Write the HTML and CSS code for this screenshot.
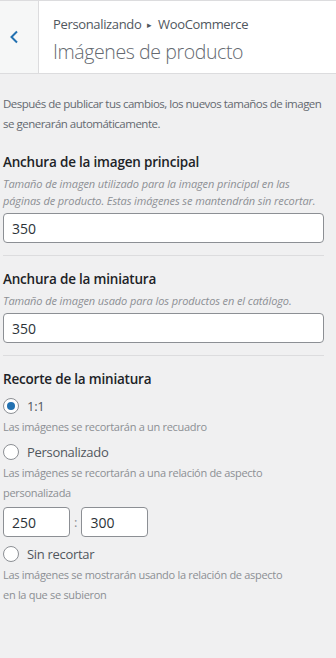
FILE: index.html
```html
<!DOCTYPE html>
<html lang="es">
<head>
    <meta charset="UTF-8">
    <meta name="viewport" content="width=device-width, initial-scale=1.0">
    <title>Imágenes de producto</title>
    <link rel="stylesheet" href="styles.css">
</head>
<body>
    <div class="section-header">
        <button class="back-btn" aria-label="Volver">
            <svg width="10" height="14" viewBox="0 0 10 14"><path d="M8 1.5 2.5 7 8 12.5" fill="none" stroke="#2271b1" stroke-width="2"/></svg>
        </button>
        <div class="section-title">
            <span class="breadcrumb">Personalizando <span class="sep">&#9656;</span> WooCommerce</span>
            <h2>Imágenes de producto</h2>
        </div>
    </div>

    <div class="controls">
        <p class="intro">Después de publicar tus cambios, los nuevos tamaños de imagen se generarán automáticamente.</p>

        <div class="control">
            <label class="control-title" for="singleWidth">Anchura de la imagen principal</label>
            <p class="control-desc">Tamaño de imagen utilizado para la imagen principal en las páginas de producto. Estas imágenes se mantendrán sin recortar.</p>
            <input id="singleWidth" class="text-input" type="text" value="350">
        </div>

        <div class="control">
            <label class="control-title" for="thumbWidth">Anchura de la miniatura</label>
            <p class="control-desc">Tamaño de imagen usado para los productos en el catálogo.</p>
            <input id="thumbWidth" class="text-input" type="text" value="350">
        </div>

        <div class="control last">
            <span class="control-title">Recorte de la miniatura</span>
            <label class="radio-row">
                <span class="radio checked"></span>
                <span class="radio-label">1:1</span>
            </label>
            <p class="radio-desc">Las imágenes se recortarán a un recuadro</p>
            <label class="radio-row">
                <span class="radio"></span>
                <span class="radio-label">Personalizado</span>
            </label>
            <p class="radio-desc">Las imágenes se recortarán a una relación de aspecto personalizada</p>
            <div class="ratio">
                <input class="text-input small" type="text" value="250">
                <span class="colon">:</span>
                <input class="text-input small" type="text" value="300">
            </div>
            <label class="radio-row">
                <span class="radio"></span>
                <span class="radio-label">Sin recortar</span>
            </label>
            <p class="radio-desc">Las imágenes se mostrarán usando la relación de aspecto en la que se subieron</p>
        </div>
    </div>
</body>
</html>
```

FILE: styles.css
```css
body {
    margin: 0;
    background-color: #f0f0f1;
    font-family: "Open Sans", "Noto Sans", sans-serif;
    color: #50575e;
}
.section-header {
    display: flex;
    height: 72px;
    background-color: #fff;
    border-top: 1px solid #dcdcde;
    border-bottom: 1px solid #dcdcde;
}
.back-btn {
    width: 39px;
    padding: 0 0 0 9px;
    border: none;
    border-right: 1px solid #dcdcde;
    background-color: #f6f7f7;
    display: flex;
    align-items: center;
}
.section-title {
    padding: 13px 0 0 14px;
}
.breadcrumb {
    display: block;
    font-size: 13px;
    letter-spacing: -0.35px;
    line-height: 20px;
    color: #50575e;
}
.sep {
    font-size: 9px;
    position: relative;
    top: -1px;
    margin: 0 3px;
}
.section-title h2 {
    margin: 1px 0 0;
    font-size: 19.5px;
    letter-spacing: -0.4px;
    font-weight: 300;
    line-height: 30px;
    color: #646970;
}
.controls {
    padding: 20px 12px 0 3px;
}
.intro {
    margin: 0 0 16px;
    font-size: 11.5px;
    letter-spacing: -0.5px;
    line-height: 20px;
    color: #646970;
}
.control {
    padding-bottom: 12px;
    margin-bottom: 11px;
    border-bottom: 1px solid #dcdcde;
}
.control.last {
    border-bottom: none;
}
.control-title {
    display: block;
    font-size: 13.5px;
    letter-spacing: -0.2px;
    font-weight: 600;
    line-height: 24px;
    color: #1d2327;
    margin-bottom: 1px;
}
.control-desc {
    margin: 0 0 4px;
    font-size: 11px;
    letter-spacing: -0.1px;
    font-style: italic;
    line-height: 17px;
    color: #8c8f94;
}
.text-input {
    display: block;
    box-sizing: border-box;
    width: 100%;
    height: 30px;
    padding: 0 8px;
    border: 1px solid #8c8f94;
    border-radius: 4px;
    background-color: #fff;
    font-family: inherit;
    font-size: 14px;
    color: #2c3338;
}
.radio-row {
    display: flex;
    align-items: center;
    gap: 8px;
    height: 22px;
    margin-top: 4px;
}
.radio {
    box-sizing: border-box;
    width: 16px;
    height: 16px;
    border: 1px solid #8c8f94;
    border-radius: 50%;
    background-color: #fff;
    display: flex;
    align-items: center;
    justify-content: center;
}
.radio.checked::after {
    content: "";
    width: 8px;
    height: 8px;
    border-radius: 50%;
    background-color: #2271b1;
}
.radio-label {
    font-size: 13px;
    letter-spacing: -0.3px;
    color: #50575e;
}
.radio-desc {
    max-width: 290px;
    margin: 0 0 2px;
    font-size: 11px;
    letter-spacing: -0.3px;
    line-height: 20px;
    color: #8c8f94;
}
.ratio {
    display: flex;
    align-items: center;
    gap: 4px;
    margin: 4px 0 6px;
}
.text-input.small {
    width: 67px;
}
.colon {
    font-size: 13px;
    color: #8c8f94;
}
```
